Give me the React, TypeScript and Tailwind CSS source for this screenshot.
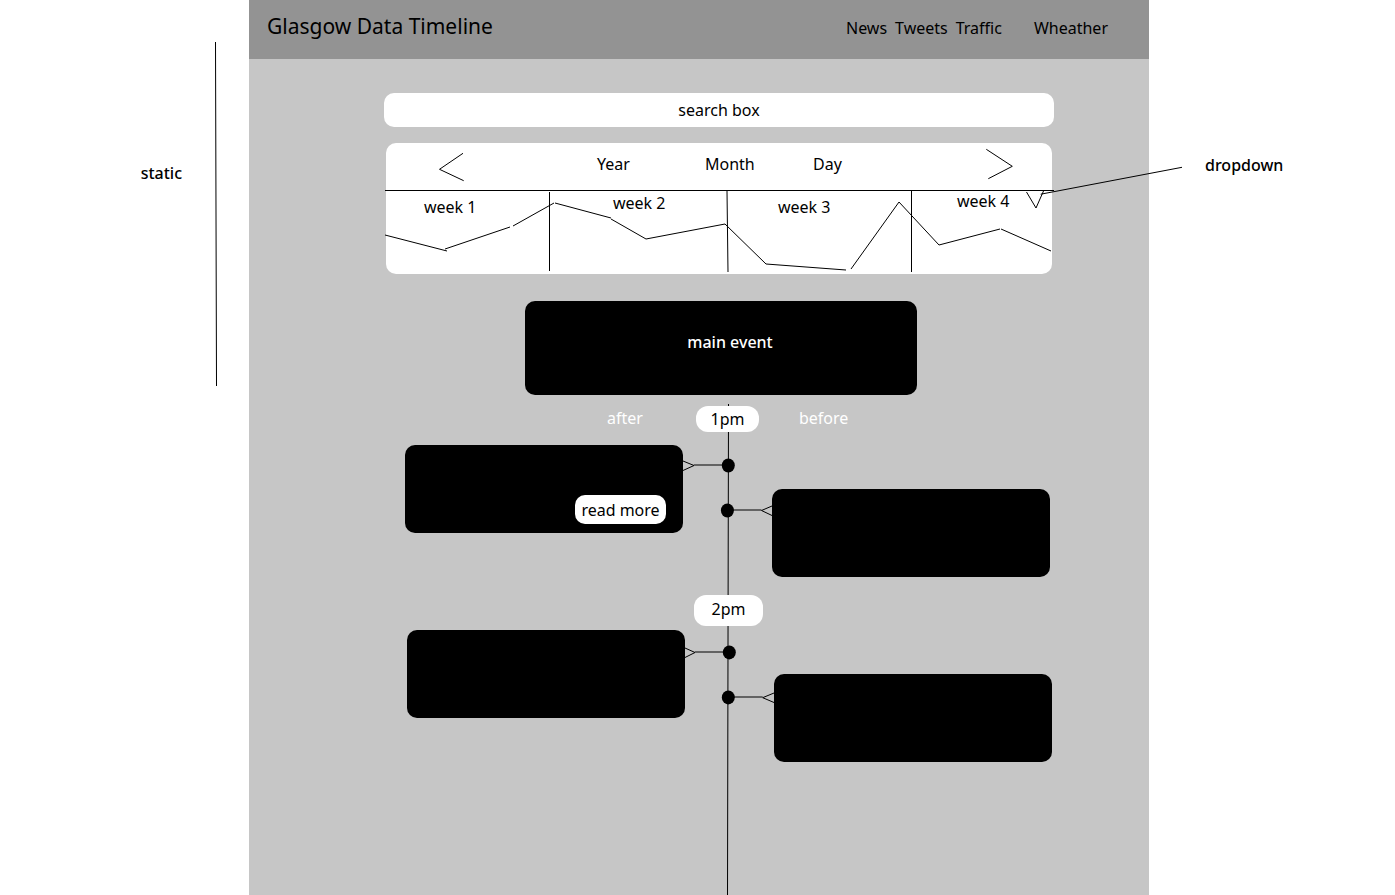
type Point = [number, number];

type Connector = {
  leftArrow: Point[];
  rightArrow: Point[];
  leftDot: Point;
  rightDot: Point;
  leftLineY: number;
  rightLineY: number;
};

type Hour = {
  id: string;
  inset: string;
  readMore: boolean;
  connector: Connector;
};

const firstHour: Hour = {
  id: '1pm',
  inset: 'pl-[156px]',
  readMore: true,
  connector: {
    leftArrow: [[0, 16], [11, 20.5], [0, 25.5]],
    rightArrow: [[89, 61], [78.5, 65.5], [89, 70.5]],
    leftDot: [45.3, 20.5],
    rightDot: [44.4, 65.5],
    leftLineY: 20,
    rightLineY: 65,
  },
};

const secondHour: Hour = {
  id: '2pm',
  inset: 'pl-[158px]',
  readMore: false,
  connector: {
    leftArrow: [[0, 18], [10, 22.5], [0, 27.5]],
    rightArrow: [[89, 63], [77.7, 67.7], [89, 72.5]],
    leftDot: [44.3, 22.4],
    rightDot: [43.3, 67.4],
    leftLineY: 22,
    rightLineY: 67,
  },
};

const weeks = [
  { label: 'week 1', className: 'pl-[38px] pt-[6px]' },
  { label: 'week 2', className: 'pl-[63px] pt-[2px]' },
  { label: 'week 3', className: 'pl-[50px] pt-[6px]' },
];

const trend = [
  '-1,44 61,60',
  '59,58 124,36',
  '127,35 168,12',
  '169,12 225,27',
  '225,28 260,48 339,33 380,73 460,79',
  '465,78 513,11 553,54 614,38',
  '615,38 665,60',
];

function Connectors({ c }: { c: Connector }) {
  return (
    <svg className="h-[132px] w-[89px] shrink-0" viewBox="0 0 89 132" fill="none" stroke="black" aria-hidden="true">
      <polyline points={c.leftArrow.join(' ')} />
      <line x1={c.leftArrow[1][0]} y1={c.leftLineY} x2={c.leftDot[0]} y2={c.leftLineY} />
      <ellipse cx={c.leftDot[0]} cy={c.leftDot[1]} rx="6.5" ry="7" fill="black" stroke="none" />
      <polyline points={c.rightArrow.join(' ')} />
      <line x1={c.rightDot[0]} y1={c.rightLineY} x2={c.rightArrow[1][0]} y2={c.rightLineY} />
      <ellipse cx={c.rightDot[0]} cy={c.rightDot[1]} rx="6.5" ry="7" fill="black" stroke="none" />
    </svg>
  );
}

function HourEvents({ hour }: { hour: Hour }) {
  return (
    <div className={`relative flex items-start ${hour.inset}`}>
      <article className="flex h-[88px] w-[278px] shrink-0 items-end justify-end rounded-[10px] bg-black pr-[17px] pb-[9px]">
        {hour.readMore && (
          <button type="button" className="h-[29px] w-[91px] rounded-[10px] bg-white leading-5">
            read more
          </button>
        )}
      </article>
      <Connectors c={hour.connector} />
      <article className="mt-11 h-[88px] w-[278px] shrink-0 rounded-[10px] bg-black" />
    </div>
  );
}

export default function App() {
  return (
    <div className="grid min-h-screen grid-cols-[249fr_minmax(0,900px)_246fr] bg-white font-['Noto_Sans',sans-serif] text-base leading-5 text-black">
      <aside className="flex items-start justify-end pt-[42px] pr-8">
        <p className="mt-[121px] mr-8 font-medium">static</p>
        <svg className="h-[344px] w-[3px]" viewBox="0 0 3 344" stroke="black" aria-hidden="true">
          <line x1="1.5" y1="0" x2="2.5" y2="344" />
        </svg>
      </aside>

      <div className="flex flex-col bg-[#c6c6c6]">
        <header className="flex h-[59px] items-baseline justify-between bg-[#939393] pt-[10px] pr-[41px] pl-[18px]">
          <h1 className="text-[21px] leading-8">Glasgow Data Timeline</h1>
          <nav className="flex gap-2">
            <a href="#news">News</a>
            <a href="#tweets">Tweets</a>
            <a href="#traffic">Traffic</a>
            <a href="#wheather" className="ml-6">Wheather</a>
          </nav>
        </header>

        <main className="flex flex-1 flex-col pt-[34px]">
          <div className="pr-[95px] pl-[135px]">
            <input
              type="text"
              role="searchbox"
              aria-label="search box"
              placeholder="search box"
              className="block h-[34px] w-full rounded-[10px] bg-white text-center leading-5 outline-none placeholder:text-black"
            />
          </div>

          <section className="mt-4 pr-[97px] pl-[137px]">
            <div className="h-[131px] rounded-[10px] bg-white">
              <div className="grid h-12 grid-cols-[211fr_108fr_108fr_173fr_66fr] items-start">
                <button type="button" aria-label="Previous" className="mt-2 ml-[52px] w-7">
                  <svg className="h-8 w-7" viewBox="0 0 28 32" fill="none" stroke="black">
                    <polyline points="25,2.3 1.5,18.3 25.7,29.7" />
                  </svg>
                </button>
                <button type="button" className="mt-[11px] justify-self-start">Year</button>
                <button type="button" className="mt-[11px] justify-self-start">Month</button>
                <button type="button" className="mt-[11px] justify-self-start">Day</button>
                <button type="button" aria-label="Next" className="mt-1 w-7">
                  <svg className="h-9 w-7" viewBox="0 0 28 36" fill="none" stroke="black">
                    <polyline points="0.3,2.3 26.3,19.3 2.3,31.7" />
                  </svg>
                </button>
              </div>
              <div className="relative grid h-[83px] grid-cols-[164fr_178fr_184fr_140fr] items-start">
                <svg
                  className="absolute inset-0 size-full overflow-visible"
                  viewBox="0 0 666 83"
                  preserveAspectRatio="none"
                  fill="none"
                  stroke="black"
                  aria-hidden="true"
                >
                  <line x1="-1" y1="-0.5" x2="668" y2="-0.5" />
                  <line x1="163.5" y1="1" x2="163.5" y2="80" />
                  <line x1="341" y1="0" x2="342" y2="81" />
                  <line x1="525.5" y1="0" x2="525.5" y2="81" />
                  {trend.map((points) => (
                    <polyline key={points} points={points} />
                  ))}
                </svg>
                {weeks.map((week) => (
                  <p key={week.label} className={week.className}>{week.label}</p>
                ))}
                <div className="flex items-start justify-between pr-[7px] pl-[45px]">
                  <p>week 4</p>
                  <button type="button" aria-label="Open week dropdown" className="relative">
                    <svg className="h-[18px] w-5" viewBox="0 0 20 18" fill="none" stroke="black">
                      <polyline points="1.5,1 11,17 18.5,0" />
                    </svg>
                  </button>
                </div>
              </div>
            </div>
          </section>

          <section className="mt-[27px] ml-[276px] flex h-[94px] w-[392px] justify-center rounded-[10px] bg-black pt-[31px] pl-[18px] text-white">
            <h2 className="font-medium">main event</h2>
          </section>

          <section className="relative mt-[9px] flex-1">
            <svg
              className="absolute top-0 left-[478px] h-full w-[2px]"
              viewBox="0 0 2 491"
              preserveAspectRatio="none"
              stroke="black"
              aria-hidden="true"
            >
              <line x1="1.5" y1="0" x2="0.5" y2="491" />
            </svg>
            <div className="relative flex items-start pt-[2px] pl-[358px] text-white">
              <p className="w-[89px] pt-[2px]">after</p>
              <time className="h-[26px] w-[63px] rounded-[12px] bg-white pt-[3px] text-center text-black">
                1pm
              </time>
              <p className="pt-[2px] pl-10">before</p>
            </div>
            <div className="mt-[13px]">
              <HourEvents hour={firstHour} />
            </div>
            <div className="relative mt-[18px] mb-1 pl-[445px]">
              <time className="block h-[31px] w-[69px] rounded-[12px] bg-white pt-1 text-center">
                2pm
              </time>
            </div>
            <HourEvents hour={secondHour} />
          </section>
        </main>
      </div>

      <aside className="relative pt-[155px] pl-14">
        <svg
          className="pointer-events-none absolute top-[166px] -left-[109px] h-[30px] w-[143px]"
          viewBox="0 0 143 30"
          stroke="black"
          aria-hidden="true"
        >
          <line x1="0.7" y1="28.2" x2="142" y2="1.3" />
        </svg>
        <p className="font-medium">dropdown</p>
      </aside>
    </div>
  );
}
